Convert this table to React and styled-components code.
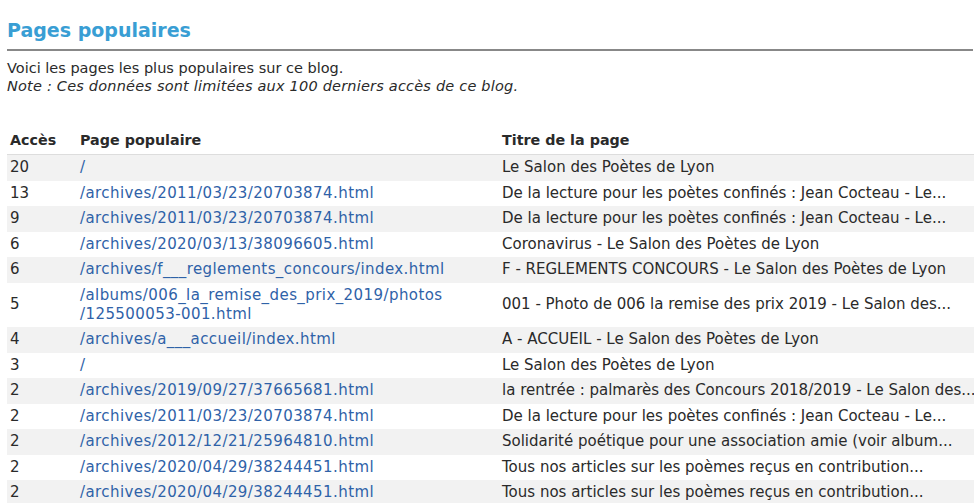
import React from 'react';
import styled, { createGlobalStyle } from 'styled-components';

const GlobalStyle = createGlobalStyle`
  html, body {
    margin: 0;
    padding: 0;
    background: #fff;
    overflow: hidden;
  }
  body {
    font-family: "DejaVu Sans", Verdana, sans-serif;
    font-size: 15px;
    color: #2a2a2a;
  }
`;

const Page = styled.div`
  padding: 17px 0 0 7px;
  width: 1100px;
`;

const Title = styled.h2`
  margin: 0;
  width: 966px;
  font-size: 19px;
  font-weight: bold;
  color: #399ed4;
  line-height: 26px;
  padding-bottom: 6px;
  border-bottom: 2px solid #888;
`;

const Intro = styled.p`
  margin: 8px 0 0;
  font-size: 14.5px;
  line-height: 18px;
`;

const Note = styled.em`
  display: block;
  letter-spacing: 0.2px;
`;

const Table = styled.table`
  margin-top: 33px;
  border-collapse: collapse;
  width: 1100px;
`;

const Head = styled.th`
  text-align: left;
  font-weight: bold;
  font-size: 14.3px;
  padding: 3px 3px 4px;
  line-height: 19px;
  border-bottom: 1px solid #ddd;
  width: ${(p) => p.w || 'auto'};
`;

const Row = styled.tr`
  background: ${(p) => (p.striped ? '#f2f2f2' : '#fff')};
`;

const Cell = styled.td`
  padding: 3px 3px 3.5px;
  line-height: 19px;
  vertical-align: middle;
  white-space: ${(p) => (p.nowrap ? 'nowrap' : 'normal')};
`;

const Link = styled.a`
  color: #2f62a8;
  text-decoration: none;
  letter-spacing: 0.42px;
`;

const rows = [
  ['20', ['/'], 'Le Salon des Poètes de Lyon'],
  ['13', ['/archives/2011/03/23/20703874.html'], 'De la lecture pour les poètes confinés : Jean Cocteau - Le...'],
  ['9', ['/archives/2011/03/23/20703874.html'], 'De la lecture pour les poètes confinés : Jean Cocteau - Le...'],
  ['6', ['/archives/2020/03/13/38096605.html'], 'Coronavirus - Le Salon des Poètes de Lyon'],
  ['6', ['/archives/f___reglements_concours/index.html'], 'F - REGLEMENTS CONCOURS - Le Salon des Poètes de Lyon'],
  ['5', ['/albums/006_la_remise_des_prix_2019/photos', '/125500053-001.html'], '001 - Photo de 006 la remise des prix 2019 - Le Salon des...'],
  ['4', ['/archives/a___accueil/index.html'], 'A - ACCUEIL - Le Salon des Poètes de Lyon'],
  ['3', ['/'], 'Le Salon des Poètes de Lyon'],
  ['2', ['/archives/2019/09/27/37665681.html'], 'la rentrée : palmarès des Concours 2018/2019 - Le Salon des...'],
  ['2', ['/archives/2011/03/23/20703874.html'], 'De la lecture pour les poètes confinés : Jean Cocteau - Le...'],
  ['2', ['/archives/2012/12/21/25964810.html'], 'Solidarité poétique pour une association amie (voir album...'],
  ['2', ['/archives/2020/04/29/38244451.html'], 'Tous nos articles sur les poèmes reçus en contribution...'],
  ['2', ['/archives/2020/04/29/38244451.html'], 'Tous nos articles sur les poèmes reçus en contribution...'],
];

export default function App() {
  return (
    <>
      <GlobalStyle />
      <Page>
        <Title>Pages populaires</Title>
        <Intro>
          Voici les pages les plus populaires sur ce blog.
          <Note>Note : Ces données sont limitées aux 100 derniers accès de ce blog.</Note>
        </Intro>
        <Table>
          <thead>
            <tr>
              <Head w="64px">Accès</Head>
              <Head w="416px">Page populaire</Head>
              <Head>Titre de la page</Head>
            </tr>
          </thead>
          <tbody>
            {rows.map(([count, path, title], i) => (
              <Row key={i} striped={i % 2 === 0}>
                <Cell>{count}</Cell>
                <Cell>
                  <Link href="#">
                    {path.map((part, j) => (
                      <React.Fragment key={j}>
                        {j > 0 && <br />}
                        {part}
                      </React.Fragment>
                    ))}
                  </Link>
                </Cell>
                <Cell nowrap>{title}</Cell>
              </Row>
            ))}
          </tbody>
        </Table>
      </Page>
    </>
  );
}
